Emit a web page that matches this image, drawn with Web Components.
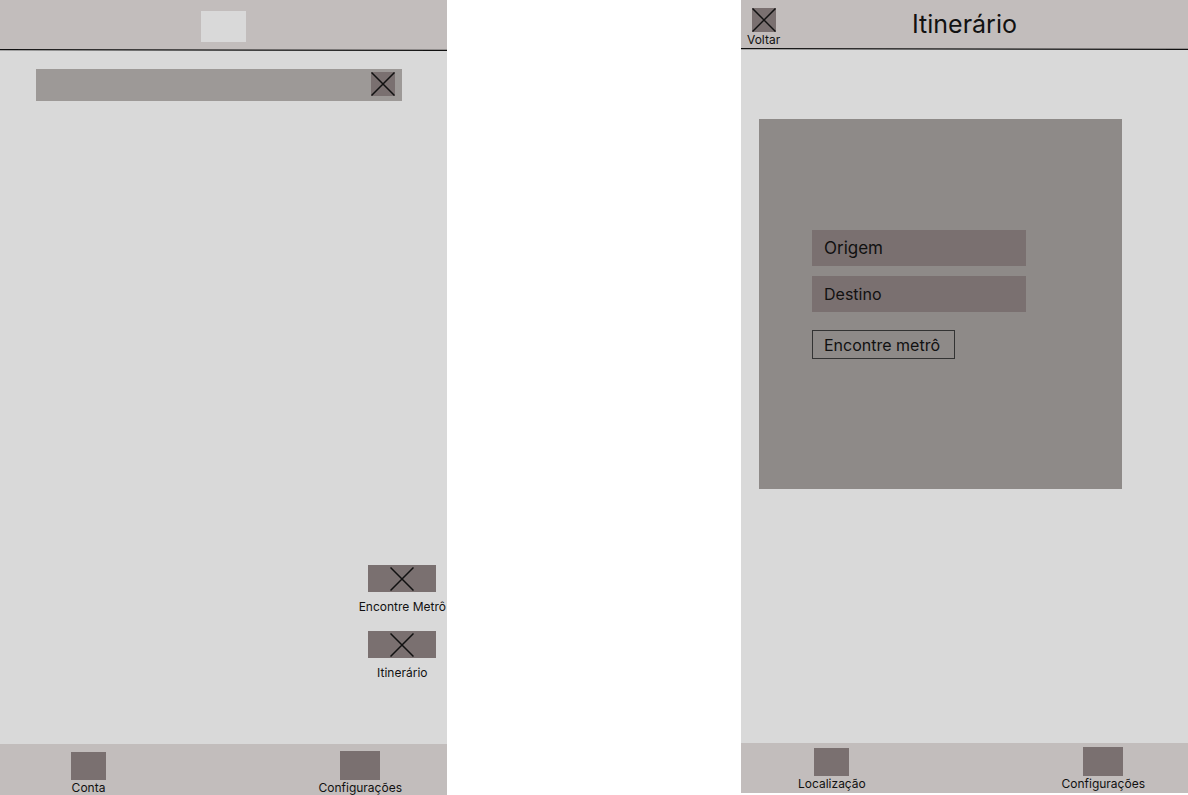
<!DOCTYPE html>
<html lang="pt-BR">
<head>
<meta charset="utf-8">
<title>Metrô – Itinerário</title>
<style>
  body {
    margin: 0;
    background: #fff;
    color: #111;
    font-family: Inter, "Liberation Sans", sans-serif;
    --screen: #d9d9d9;
    --bar: #c2bdbc;
    --block: #7a7070;
    --field: #9d9997;
    --panel: #8e8a88;
  }
  main {
    display: grid;
    grid-template-columns: minmax(0, 1fr) minmax(0, 1fr);
    column-gap: 24.75%;
    min-height: 100vh;
  }
  .route { margin-bottom: 2px; --head: 48px; --foot: 50px; }
  .map { --head: 49px; --foot: 51px; }
  .logo { width: 45px; height: 31px; margin-top: 4px; background: var(--screen); }
  h1 { margin: 0; font-size: 25px; line-height: 30px; font-weight: 400; }
  .back { justify-self: start; margin: 8px 0 0 6px; }
  .actions {
    display: flex;
    flex-direction: column;
    align-items: center;
    align-self: flex-end;
    gap: 17px;
    margin: auto 1px 64px 0;
  }
  .map wf-search { margin: 18px 45px 0 36px; }
  .route wf-panel { margin: 69px 66px 0 18px; }
  .map wf-nav { padding: 0 45px 0 71px; }
  .route wf-nav { padding: 0 43px 2px 57px; }
</style>
</head>
<body>
<main>
  <wf-screen class="map">
    <div slot="title" class="logo"></div>
    <wf-search></wf-search>
    <div class="actions">
      <wf-tile w="68" h="27" gap="7" cross>Encontre Metrô</wf-tile>
      <wf-tile w="68" h="27" gap="7" cross>Itinerário</wf-tile>
    </div>
    <wf-nav slot="footer">
      <wf-tile w="35" h="28">Conta</wf-tile>
      <wf-tile w="40" h="29">Configurações</wf-tile>
    </wf-nav>
  </wf-screen>
  <wf-screen class="route">
    <wf-tile slot="start" class="back" w="24" h="24" cross>Voltar</wf-tile>
    <h1 slot="title">Itinerário</h1>
    <wf-panel>
      <wf-field size="17">Origem</wf-field>
      <wf-field size="16">Destino</wf-field>
      <wf-button>Encontre metrô</wf-button>
    </wf-panel>
    <wf-nav slot="footer">
      <wf-tile w="35" h="28">Localização</wf-tile>
      <wf-tile w="40" h="29">Configurações</wf-tile>
    </wf-nav>
  </wf-screen>
</main>
<script>
  const CROSS = `<svg viewBox="0 0 24 24" width="24" height="24" aria-hidden="true">
    <path d="M0.5 0.5 23.5 23.5M23.5 0.5 0.5 23.5" fill="none" stroke="#111" stroke-width="1.5"/></svg>`;

  class Base extends HTMLElement {
    constructor() {
      super();
      this.attachShadow({ mode: "open" });
    }
    connectedCallback() {
      this.shadowRoot.innerHTML = this.render();
    }
  }

  customElements.define("wf-screen", class extends Base {
    render() {
      return `<style>
        :host { display: flex; flex-direction: column; background: var(--screen); }
        header { display: grid; grid-template-columns: 1fr auto 1fr; height: var(--head); background: var(--bar); }
        .title { grid-column: 2; align-self: center; }
        .start { grid-column: 1; display: grid; }
        .rule { display: block; width: 100%; height: 2px; background: linear-gradient(var(--bar) 50%, var(--screen) 50%); }
        section { flex: 1; display: flex; flex-direction: column; }
      </style>
      <header><div class="start"><slot name="start"></slot></div><div class="title"><slot name="title"></slot></div></header>
      <svg class="rule" viewBox="0 0 100 2" preserveAspectRatio="none" aria-hidden="true">
        <path d="M0 0 100 .8V2L0 1.2Z" fill="#111"/></svg>
      <section><slot></slot></section>
      <slot name="footer"></slot>`;
    }
  });

  customElements.define("wf-tile", class extends Base {
    render() {
      const w = this.getAttribute("w"), h = this.getAttribute("h");
      const gap = this.getAttribute("gap") || 0;
      return `<style>
        :host { display: block; }
        button { display: flex; flex-direction: column; align-items: center; gap: ${gap}px;
          padding: 0; border: 0; background: none; color: inherit;
          font: 12px/15px Inter, "Liberation Sans", sans-serif; cursor: pointer; white-space: nowrap; }
        .box { display: grid; place-items: center; width: ${w}px; height: ${h}px; background: var(--block); }
        svg { display: block; }
      </style>
      <button type="button"><span class="box">${this.hasAttribute("cross") ? CROSS : ""}</span><span><slot></slot></span></button>`;
    }
  });

  customElements.define("wf-nav", class extends Base {
    render() {
      return `<style>
        :host { display: block; background: var(--bar); box-sizing: border-box; height: var(--foot); }
        nav { display: flex; justify-content: space-between; align-items: flex-end; height: 100%; }
      </style><nav><slot></slot></nav>`;
    }
  });

  customElements.define("wf-search", class extends Base {
    render() {
      return `<style>
        :host { display: block; background: var(--field); }
        form { display: flex; align-items: center; box-sizing: border-box; height: 32px; padding: 0 7px 2px 0; }
        input { flex: 1; width: 0; min-width: 0; height: 30px; box-sizing: border-box; padding: 0 12px; border: 0;
          background: none; font: 16px/20px Inter, "Liberation Sans", sans-serif; }
        button { width: 24px; height: 24px; padding: 0; border: 0; background: var(--block); cursor: pointer; }
        svg { display: block; }
      </style>
      <form><input type="text" aria-label="Buscar"><button type="button" aria-label="Limpar">${CROSS}</button></form>`;
    }
  });

  customElements.define("wf-panel", class extends Base {
    render() {
      return `<style>
        :host { display: block; background: var(--panel); }
        form { display: flex; flex-direction: column; gap: 10px; box-sizing: border-box;
          min-height: 370px; padding: 111px 96px 111px 53px; }
      </style><form><slot></slot></form>`;
    }
  });

  customElements.define("wf-field", class extends Base {
    render() {
      return `<style>
        :host { display: flex; align-items: center; height: 36px; padding-left: 12px; background: var(--block); }
        label { font-size: ${this.getAttribute("size")}px; line-height: 20px; }
        input { flex: 1; width: 0; min-width: 0; height: 32px; box-sizing: border-box; padding: 0 8px; border: 0;
          background: none; font: 16px/20px Inter, "Liberation Sans", sans-serif; }
      </style><label for="f"><slot></slot></label><input id="f" type="text">`;
    }
  });

  customElements.define("wf-button", class extends Base {
    render() {
      return `<style>
        :host { display: block; margin-top: 8px; }
        button { height: 29px; padding: 0 14px 0 11px; border: 1px solid #333; background: none; color: inherit;
          font: 16px/20px Inter, "Liberation Sans", sans-serif; cursor: pointer; }
      </style><button type="button"><slot></slot></button>`;
    }
  });
</script>
</body>
</html>
